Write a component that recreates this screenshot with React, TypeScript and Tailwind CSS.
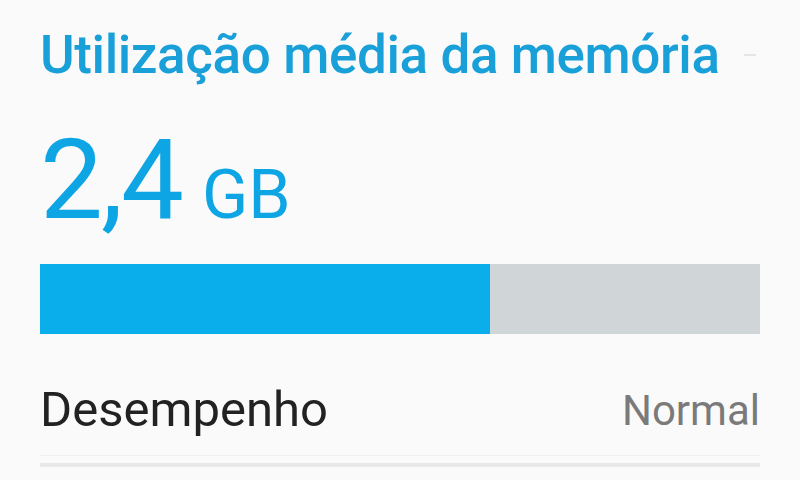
export default function App() {
  const used = 2.4;
  const percent = 62.5;

  return (
    <div
      className="w-[800px] h-[480px] overflow-hidden bg-[#fafafa] px-10"
      style={{ fontFamily: "Roboto, 'Noto Sans', sans-serif" }}
    >
      <div className="flex items-center justify-between pt-[20px]">
        <h1 className="text-[53px] leading-[70px] font-medium text-[#1aa0d8] tracking-[-0.4px]">
          Utilização média da memória
        </h1>
        <div className="w-3 h-[2px] bg-[#e3e6e8] mr-[4px]" />
      </div>

      <div className="flex items-baseline mt-[35px] h-[110px] text-[#0ea5e4]">
        <span className="text-[112px] leading-[110px] tracking-[-2px]">
          {used.toString().replace(".", ",")}
        </span>
        <span className="text-[68px] leading-none ml-[20px]">GB</span>
      </div>

      <div className="flex h-[70px] mt-[29px] bg-[#d0d6d8]">
        <div className="h-full bg-[#0aaeea]" style={{ width: `${percent}%` }} />
      </div>

      <div className="flex items-center justify-between mt-[46px] h-[60px]">
        <span className="text-[49px] text-[#222]">Desempenho</span>
        <span className="text-[42px] text-[#7a7a7a]">Normal</span>
      </div>

      <div className="mt-[15px] h-px bg-[#f0f0f0]" />
      <div className="mt-[7px] h-[4px] bg-[#e8e8e8]" />
    </div>
  );
}
